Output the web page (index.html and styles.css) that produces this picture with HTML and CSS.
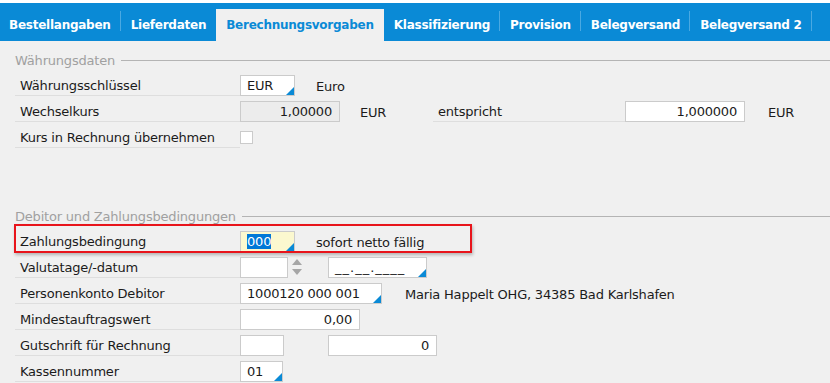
FILE: index.html
```html
<!DOCTYPE html>
<html lang="de">

<head>
    <meta charset="UTF-8">
    <meta name="viewport" content="width=device-width">
    <title>Berechnungsvorgaben</title>
    <link rel="stylesheet" href="styles.css">
</head>

<body>
    <div class="tabs">
        <div class="tab sep">Bestellangaben</div>
        <div class="tab">Lieferdaten</div>
        <div class="tab active">Berechnungsvorgaben</div>
        <div class="tab sep">Klassifizierung</div>
        <div class="tab sep">Provision</div>
        <div class="tab sep">Belegversand</div>
        <div class="tab sep">Belegversand 2</div>
    </div>

    <div class="panel">
        <div class="legend"><span>Währungsdaten</span></div>

        <div class="row">
            <div class="label">Währungsschlüssel</div>
            <div class="field w55 pick">EUR</div>
            <span class="note">Euro</span>
        </div>

        <div class="row">
            <div class="label">Wechselkurs</div>
            <div class="field w100 num readonly">1,00000</div>
            <span class="unit">EUR</span>
            <div class="label label-mid">entspricht</div>
            <div class="field w120 num">1,000000</div>
            <span class="note note-eur">EUR</span>
        </div>

        <div class="row">
            <div class="label">Kurs in Rechnung übernehmen</div>
            <div class="check"></div>
        </div>

        <div class="legend legend-gap"><span>Debitor und Zahlungsbedingungen</span></div>

        <div class="row marked">
            <div class="label">Zahlungsbedingung</div>
            <div class="field w55 pick focus"><span class="sel">000</span></div>
            <span class="note">sofort netto fällig</span>
        </div>

        <div class="row">
            <div class="label">Valutatage/-datum</div>
            <div class="field w48"></div>
            <div class="spin">
                <span class="up"></span>
                <span class="down"></span>
            </div>
            <div class="field w99 pick date">__.__.____</div>
        </div>

        <div class="row">
            <div class="label">Personenkonto Debitor</div>
            <div class="field w142 pick">1000120 000 001</div>
            <span class="note note-wide">Maria Happelt OHG, 34385 Bad Karlshafen</span>
        </div>

        <div class="row">
            <div class="label">Mindestauftragswert</div>
            <div class="field w120 num">0,00</div>
        </div>

        <div class="row">
            <div class="label">Gutschrift für Rechnung</div>
            <div class="field w44"></div>
            <div class="field w109 num gap44">0</div>
        </div>

        <div class="row">
            <div class="label">Kassennummer</div>
            <div class="field w43 pick">01</div>
        </div>
    </div>
</body>

</html>
```

FILE: styles.css
```css
body {
    margin: 0;
    background-color: #f0f0f0;
    font-family: 'DejaVu Sans', 'Noto Sans', sans-serif;
    font-size: 13px;
    letter-spacing: -0.2px;
    color: #1b1b1b;
    overflow: hidden;
}

/* Reiterleiste */
.tabs {
    display: flex;
    align-items: flex-end;
    height: 38px;
    border-top: 3px solid #ffffff;
    background-color: #0a8ad6;
}

.tab {
    position: relative;
    height: 32px;
    line-height: 33px;
    padding: 0 10px;
    color: #ffffff;
    font-weight: bold;
    font-size: 12px;
    letter-spacing: -0.25px;
    white-space: nowrap;
}

.tab:first-child {
    padding-left: 9px;
}

.tab.sep::after {
    content: "";
    position: absolute;
    right: 0;
    top: 2px;
    width: 1px;
    height: 20px;
    background-color: #4aa9e2;
}

.tab.active {
    background-color: #f0f0f0;
    color: #0a8ad6;
}

/* Formularbereich */
.panel {
    padding-left: 15px;
}

.legend {
    display: flex;
    align-items: center;
    height: 16px;
    margin-top: 11px;
    color: #a0a0a0;
}

.legend::after {
    content: "";
    flex: 1;
    height: 1px;
    margin-left: 6px;
    background-color: #b4b4b4;
}

.legend-gap {
    margin-top: 60px;
}

.row {
    display: flex;
    align-items: center;
    height: 26px;
    padding-top: 4px;
    box-sizing: border-box;
}

.legend + .row {
    margin-top: 2px;
}

.label {
    align-self: stretch;
    display: flex;
    align-items: center;
    width: 225px;
    padding: 2px 0 0 5px;
    box-sizing: border-box;
    border-bottom: 1px solid #dedede;
}

.label-mid {
    width: 192px;
}

.field {
    position: relative;
    height: 21px;
    line-height: 20px;
    padding: 0 6px;
    box-sizing: border-box;
    border: 1px solid #cbcbcb;
    background-color: #ffffff;
    white-space: nowrap;
}

.field.num {
    text-align: right;
    padding-right: 7px;
}

.field.readonly {
    background-color: #ececec;
}

.field.focus {
    background-color: #fbf8cf;
}

.pick::after {
    content: "";
    position: absolute;
    right: 0;
    bottom: 0;
    width: 0;
    height: 0;
    border-left: 8px solid transparent;
    border-bottom: 8px solid #0a8ad6;
}

.sel {
    display: inline-block;
    line-height: 15px;
    background-color: #0078d7;
    color: #ffffff;
}

.w43 { width: 43px; }
.w44 { width: 44px; }
.w48 { width: 48px; }
.w55 { width: 55px; }
.w99 { width: 99px; }
.w100 { width: 100px; }
.w109 { width: 109px; }
.w120 { width: 120px; }
.w142 { width: 142px; }

.gap44 {
    margin-left: 44px;
}

.note {
    margin-left: 21px;
    padding-top: 2px;
    white-space: nowrap;
}

.note-eur {
    margin-left: 23px;
}

.note-wide {
    margin-left: 23px;
}

.unit {
    width: 73px;
    padding: 2px 0 0 20px;
    box-sizing: content-box;
}

.check {
    width: 13px;
    height: 13px;
    box-sizing: border-box;
    border: 1px solid #cbcbcb;
    background-color: #ffffff;
}

/* Pfeile neben Valutatage */
.spin {
    display: flex;
    flex-direction: column;
    gap: 4px;
    margin-left: 3px;
    width: 12px;
    align-items: center;
}

.spin span {
    width: 0;
    height: 0;
    border-left: 5px solid transparent;
    border-right: 5px solid transparent;
}

.spin .up {
    border-bottom: 6px solid #a6a6a6;
}

.spin .down {
    border-top: 6px solid #a6a6a6;
}

.date {
    margin-left: 25px;
    letter-spacing: 1px;
}

/* rote Markierung um die Zahlungsbedingung */
.marked {
    position: relative;
}

.marked::after {
    content: "";
    position: absolute;
    left: -1px;
    top: -2px;
    width: 458px;
    height: 29px;
    box-sizing: border-box;
    border: 2px solid #e8141b;
    box-shadow: 1px 2px 3px rgba(0, 0, 0, 0.25);
    pointer-events: none;
}
```
